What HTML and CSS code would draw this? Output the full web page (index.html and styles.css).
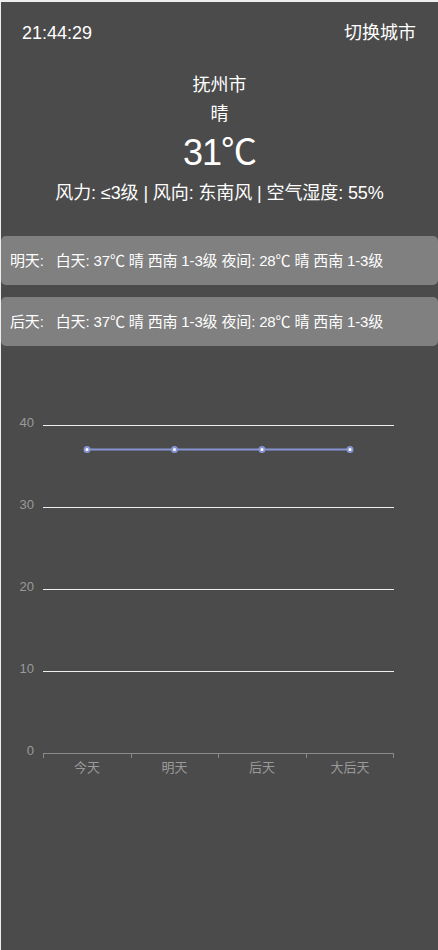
FILE: index.html
```html
<!DOCTYPE html>
<html lang="zh-CN">
<head>
<meta charset="utf-8">
<title>天气</title>
<link rel="stylesheet" href="styles.css">
</head>
<body>
<div class="app">
  <div class="topbar">
    <span class="clock">21:44:29</span>
    <span class="switch">切换城市</span>
  </div>
  <div class="now">
    <div class="city">抚州市</div>
    <div class="weather">晴</div>
    <div class="temp">31℃</div>
    <div class="detail">风力: ≤3级 | 风向: 东南风 | 空气湿度: 55%</div>
  </div>
  <div class="forecast">
    <div class="card">明天:&nbsp;&nbsp; 白天: 37℃ 晴 西南 1-3级 夜间: 28℃ 晴 西南 1-3级</div>
    <div class="card">后天:&nbsp;&nbsp; 白天: 37℃ 晴 西南 1-3级 夜间: 28℃ 晴 西南 1-3级</div>
  </div>
  <svg class="chart" width="437" height="400" viewBox="0 0 437 400">
    <g class="grid">
      <line x1="42" y1="45.5" x2="393" y2="45.5"/>
      <line x1="42" y1="127.5" x2="393" y2="127.5"/>
      <line x1="42" y1="209.5" x2="393" y2="209.5"/>
      <line x1="42" y1="291.5" x2="393" y2="291.5"/>
    </g>
    <g class="axis">
      <line x1="42" y1="373.5" x2="393" y2="373.5"/>
      <line x1="42.5" y1="373" x2="42.5" y2="378"/>
      <line x1="130.5" y1="373" x2="130.5" y2="378"/>
      <line x1="217.5" y1="373" x2="217.5" y2="378"/>
      <line x1="305.5" y1="373" x2="305.5" y2="378"/>
      <line x1="392.5" y1="373" x2="392.5" y2="378"/>
    </g>
    <g class="ylabels">
      <text x="33" y="44">40</text>
      <text x="33" y="126">30</text>
      <text x="33" y="208">20</text>
      <text x="33" y="290">10</text>
      <text x="33" y="372">0</text>
    </g>
    <g class="xlabels">
      <text x="86" y="388">今天</text>
      <text x="173.5" y="388">明天</text>
      <text x="261" y="388">后天</text>
      <text x="349" y="388">大后天</text>
    </g>
    <polyline class="series" points="86,69.5 173.5,69.5 261,69.5 349,69.5"/>
    <g class="dots">
      <circle cx="86" cy="69.5" r="2.5"/>
      <circle cx="173.5" cy="69.5" r="2.5"/>
      <circle cx="261" cy="69.5" r="2.5"/>
      <circle cx="349" cy="69.5" r="2.5"/>
    </g>
  </svg>
</div>
</body>
</html>
```

FILE: styles.css
```css
html, body {
  margin: 0;
  padding: 0;
}
body {
  background: #eeeeee;
  padding: 2px 0 0 1px;
  font-family: "Liberation Sans", Arial, "Noto Sans CJK SC", sans-serif;
  color: #ffffff;
}
.app {
  box-sizing: border-box;
  min-height: 948px;
  background: #4b4b4b;
  display: flex;
  flex-direction: column;
  padding-top: 20px;
}
.topbar {
  display: flex;
  justify-content: space-between;
  align-items: center;
  padding: 0 22px 0 21px;
  font-size: 18px;
  line-height: 22px;
}
.now {
  display: flex;
  flex-direction: column;
  align-items: center;
  margin-top: 27px;
}
.city, .weather {
  font-size: 18px;
  line-height: 29px;
}
.temp {
  font-size: 36px;
  line-height: 42px;
  margin-top: 3px;
  letter-spacing: -1px;
}
.detail {
  font-size: 18px;
  line-height: 26px;
  margin-top: 6px;
  letter-spacing: -0.1px;
}
.forecast {
  display: flex;
  flex-direction: column;
  gap: 12px;
  margin-top: 30px;
}
.card {
  background: #808080;
  border-radius: 5px;
  padding: 15px 9px;
  font-size: 15px;
  line-height: 19px;
  letter-spacing: -0.15px;
  white-space: nowrap;
}
.chart {
  display: block;
  margin-top: 34px;
}
.grid line {
  stroke: #eeeeee;
  stroke-width: 1;
}
.axis line {
  stroke: #8a8a8a;
  stroke-width: 1;
}
.ylabels text {
  fill: #9a9a9a;
  font-size: 13px;
  text-anchor: end;
  dominant-baseline: middle;
  font-family: "Liberation Sans", Arial, "Noto Sans CJK SC", sans-serif;
}
.xlabels text {
  fill: #9a9a9a;
  font-size: 13px;
  text-anchor: middle;
  dominant-baseline: middle;
  font-family: "Noto Sans CJK SC", sans-serif;
}
.series {
  fill: none;
  stroke: #8794d2;
  stroke-width: 2;
}
.dots circle {
  fill: #ffffff;
  stroke: #8794d2;
  stroke-width: 2;
}
```
